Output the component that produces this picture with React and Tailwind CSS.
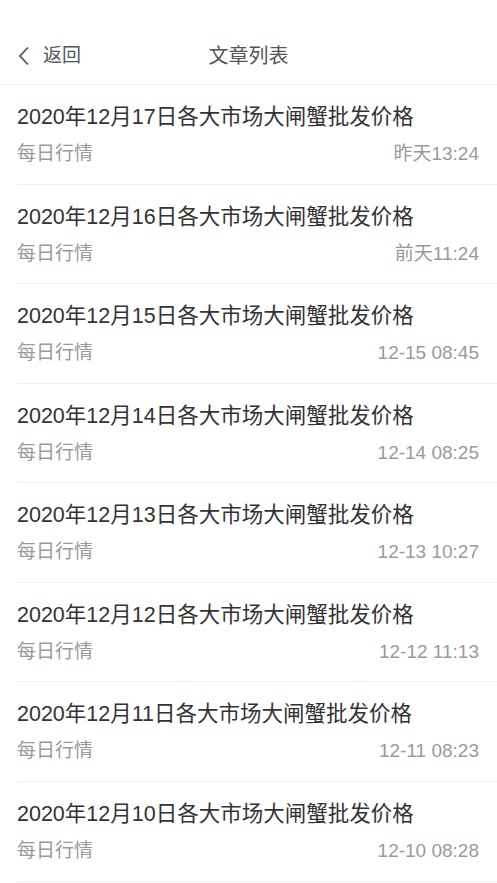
import React from "react";

const items = [
  ["2020年12月17日各大市场大闸蟹批发价格", "昨天13:24"],
  ["2020年12月16日各大市场大闸蟹批发价格", "前天11:24"],
  ["2020年12月15日各大市场大闸蟹批发价格", "12-15 08:45"],
  ["2020年12月14日各大市场大闸蟹批发价格", "12-14 08:25"],
  ["2020年12月13日各大市场大闸蟹批发价格", "12-13 10:27"],
  ["2020年12月12日各大市场大闸蟹批发价格", "12-12 11:13"],
  ["2020年12月11日各大市场大闸蟹批发价格", "12-11 08:23"],
  ["2020年12月10日各大市场大闸蟹批发价格", "12-10 08:28"],
];

export default function App() {
  return (
    <div
      className="w-[497px] h-[883px] bg-white overflow-hidden"
      style={{ fontFamily: '"Liberation Sans", "Noto Sans CJK SC", sans-serif' }}
    >
      <div className="relative h-[85px] border-b border-[#ececec] flex items-center pt-[27px]">
        <div className="flex items-center pl-[18px] text-[#555] text-[19px] leading-[26px]">
          <svg width="12" height="20" viewBox="0 0 12 20" className="mr-[13px]">
            <path d="M10 1.5 L2 10 L10 18.5" fill="none" stroke="#555" strokeWidth="1.8" />
          </svg>
          <span>返回</span>
        </div>
        <div className="absolute left-0 right-0 top-[43px] text-center text-[20px] leading-[26px] text-[#555] pointer-events-none">
          文章列表
        </div>
      </div>
      <div>
        {items.map(([title, time], i) => (
          <div key={i} className="pl-[17px]">
            <div className="h-[99.57px] border-b border-[#eeeeee] pt-[18px] pr-[18px]">
              <div className="text-[21.5px] leading-[28px] text-[#333] whitespace-nowrap">{title}</div>
              <div className="mt-[10px] flex justify-between text-[19px] leading-[26px] text-[#9a9a9a]">
                <span>每日行情</span>
                <span>{time}</span>
              </div>
            </div>
          </div>
        ))}
      </div>
    </div>
  );
}
